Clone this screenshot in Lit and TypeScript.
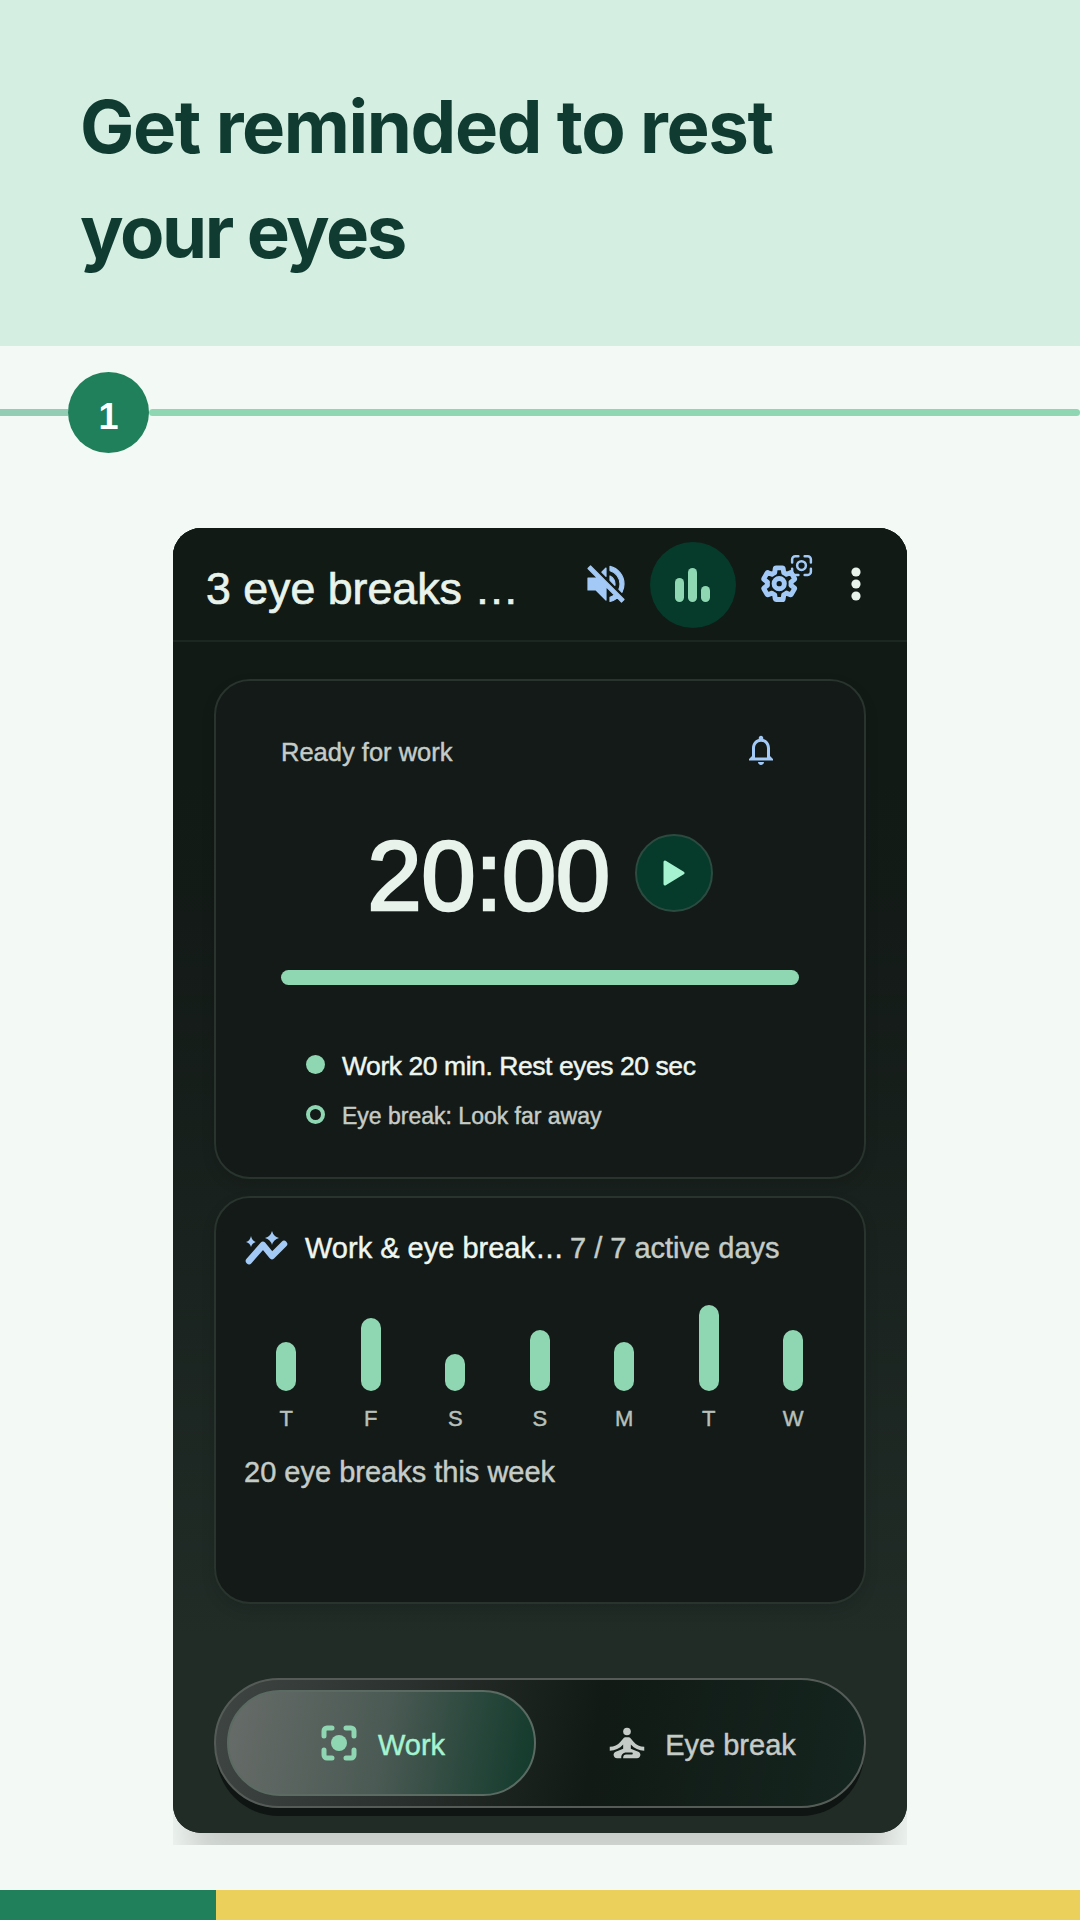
import { LitElement, html, css } from "lit";
import { customElement } from "lit/decorators.js";

const focusCorners = "M3 9V6a3 3 0 0 1 3-3h3M15 3h3a3 3 0 0 1 3 3v3M21 15v3a3 3 0 0 1-3 3h-3M9 21H6a3 3 0 0 1-3-3v-3";

@customElement("app-root")
export class AppRoot extends LitElement {
  static styles = css`
    :host { display: flex; flex-direction: column; width: 1080px; height: 1920px; background: #f3f9f5; font-family: "Liberation Sans", Arial, sans-serif; overflow: hidden; }
    svg { display: block; flex: none; }
    .hero { height: 346px; box-sizing: border-box; background: #d5eee2; padding: 74px 80px 0; }
    .hero h1 { margin: 0; font: 700 72.5px/105px Inter, sans-serif; letter-spacing: -1.4px; color: #0f3b30; }
    .hero .tight { letter-spacing: -2.4px; }
    .step { display: flex; align-items: center; margin-top: 26px; }
    .line { height: 7px; background: #93cdb3; }
    .line.a { width: 68px; }
    .line.b { flex: 1; }
    .num { width: 81px; height: 81px; border-radius: 50%; background: #21805c; color: #fff; display: flex; align-items: center; justify-content: center; font: 700 36px "Liberation Sans", sans-serif; padding-top: 9px; box-sizing: border-box; }
    .shot { margin: 75px 0 0 173px; width: 734px; height: 1317px; overflow: hidden; }
    .phone { width: 734px; height: 1305px; border-radius: 28px; background: #111a15; box-shadow: 0 50px 40px -15px rgba(0,0,0,.18); -webkit-text-stroke: .45px; }
    .phone-clip { display: flex; flex-direction: column; height: 100%; border-radius: 28px; overflow: hidden; background: linear-gradient(180deg, #111a15 8%, #131a17 30%, #212c27 85%); }
    .top { height: 114px; flex: none; box-sizing: border-box; background: #111a15; border-bottom: 2px solid #1d2722; display: flex; align-items: center; padding-left: 33px; }
    .top .title { font-size: 44.7px; color: #e8f3ec; width: 376px; white-space: nowrap; padding-top: 9px; -webkit-text-stroke: .7px; }
    .active { width: 86px; height: 86px; border-radius: 50%; background: #063a2b; display: flex; align-items: center; justify-content: center; margin: 2px 0 0 20px; }
    .gear-wrap { width: 60px; height: 60px; margin-left: 18px; position: relative; }
    .gear-wrap .mini { position: absolute; left: 35px; top: -1px; }
    .dots { margin-left: 37px; }
    .body { flex: 1; display: flex; flex-direction: column; padding: 37px 41px 25px; }
    .card { background: #131a17; border: 2px solid #29342e; border-radius: 36px; box-sizing: border-box; box-shadow: 0 6px 14px rgba(0,0,0,.12); }
    .c1 { height: 500px; flex: none; padding: 0 65px; display: flex; flex-direction: column; }
    .status { display: flex; justify-content: space-between; align-items: center; margin-top: 52px; padding-right: 20px; height: 38px; color: #c5ccc8; font-size: 25.5px; }
    .status svg { margin-top: -4px; }
    .timer { display: flex; align-items: center; justify-content: center; gap: 25px; margin-top: 63px; height: 78px; }
    .digits { font-size: 98px; letter-spacing: -.5px; color: #e8f3ec; line-height: 78px; padding-top: 5px; -webkit-text-stroke: 2.6px #e8f3ec; }
    .play { width: 78px; height: 78px; box-sizing: border-box; border-radius: 50%; background: #063a2b; border: 2px solid #2b4b40; display: flex; align-items: center; justify-content: center; }
    .bar { height: 15px; border-radius: 8px; background: #8fd6b2; margin-top: 58px; }
    .legend { display: flex; align-items: center; margin-left: 25px; }
    .legend.l1 { margin-top: 66px; color: #eef6f0; font-size: 26.5px; letter-spacing: -.44px; height: 30px; }
    .legend.l2 { margin-top: 20px; color: #c5ccc8; font-size: 23px; height: 30px; }
    .dot { width: 19px; height: 19px; box-sizing: border-box; border-radius: 50%; background: #8fd6b2; margin: -4px 17px 0 0; }
    .ring { background: none; border: 4px solid #8fd6b2; }
    .c2 { height: 408px; flex: none; margin-top: 17px; padding: 0 28px; display: flex; flex-direction: column; }
    .c2-head { display: flex; align-items: center; margin-top: 30px; height: 40px; font-size: 29px; white-space: nowrap; }
    .c2-head .name { color: #eef6f0; margin-left: 17px; }
    .c2-head .days { color: #c5ccc8; margin-left: 6px; }
    .chart { display: grid; grid-template-columns: repeat(7, 84.5px); margin: 36px 0 0 0; }
    .col { display: flex; flex-direction: column; align-items: center; height: 128px; justify-content: flex-end; }
    .b { width: 20px; border-radius: 10px; background: #8fd6b2; flex: none; }
    .d { font-size: 22px; color: #b8c0bb; margin-top: 15px; height: 26px; line-height: 26px; flex: none; }
    .week { font-size: 29px; color: #c5ccc8; margin-top: 24px; }
    .nav { margin-top: 74px; height: 130px; flex: none; box-sizing: border-box; border: 2px solid #555c58; border-radius: 65px; display: flex; align-items: center; padding: 0 0 0 11px; background: linear-gradient(100deg, #3f4542 0%, #2a302d 30%, #111a15 58%, #15251f 100%); box-shadow: 0 10px 0 -2px #0f1512; }
    .seg { display: flex; align-items: center; justify-content: center; font-size: 29px; color: #c5ccc8; }
    .seg span { padding-top: 5px; }
    .seg.on { width: 309px; height: 106px; box-sizing: border-box; border: 2px solid #5b6b63; border-radius: 53px; background: linear-gradient(100deg, #676c69 0%, #4b5a54 50%, #113a2b 100%); color: #a5f3d0; gap: 18px; }
    .seg.off { flex: 1; gap: 15px; }
    .foot { display: flex; height: 30px; flex: none; margin-top: auto; }
    .g { width: 216px; background: #21805c; }
    .y { flex: 1; background: #ebd05c; }
  `;
  render() {
    const bars: [string, number][] = [["T", 49], ["F", 73], ["S", 37], ["S", 61], ["M", 49], ["T", 86], ["W", 61]];
    return html`
      <div class="hero"><h1>Get reminded to rest<br /><span class="tight">your eyes</span></h1></div>
      <div class="step"><div class="line a"></div><div class="num">1</div><div class="line b"></div></div>
      <div class="shot"><div class="phone"><div class="phone-clip">
        <div class="top">
          <div class="title">3 eye breaks …</div>
          <svg width="48" height="48" viewBox="0 0 24 24" fill="#a3c9f7" stroke="#a3c9f7" stroke-width=".6" stroke-linejoin="round"><path d="M16.5 12c0-1.77-1.02-3.29-2.5-4.03v2.21l2.45 2.45c.03-.2.05-.41.05-.63zm2.5 0c0 .94-.2 1.82-.54 2.64l1.51 1.51C20.63 14.91 21 13.5 21 12c0-4.28-2.99-7.86-7-8.77v2.06c2.89.86 5 3.54 5 6.71zM4.27 3L3 4.27 7.73 9H3v6h4l5 5v-6.73l4.25 4.25c-.67.52-1.42.93-2.25 1.18v2.06c1.38-.31 2.63-.95 3.69-1.81L19.73 21 21 19.73l-9-9L4.27 3zM12 4L9.91 6.09 12 8.18V4z"/></svg>
          <div class="active"><svg width="36" height="34" viewBox="0 0 36 34" fill="#8fd6b2"><rect x="0" y="10" width="9" height="24" rx="4.5"/><rect x="13" y="0" width="9" height="34" rx="4.5"/><rect x="26" y="18" width="9" height="16" rx="4.5"/></svg></div>
          <div class="gear-wrap">
            <svg width="60" height="60" viewBox="0 0 40 40" fill="none" stroke="#a3c9f7" stroke-width="3" stroke-linejoin="round"><g transform="translate(3.6 6.6) scale(1.1)"><path d="M19.14 12.94c.04-.3.06-.61.06-.94 0-.32-.02-.64-.07-.94l2.03-1.58c.18-.14.23-.41.12-.61l-1.92-3.32c-.12-.22-.37-.29-.59-.22l-2.39.96c-.5-.38-1.03-.7-1.62-.94l-.36-2.54c-.04-.24-.24-.41-.48-.41h-3.84c-.24 0-.43.17-.47.41l-.36 2.54c-.59.24-1.13.57-1.62.94l-2.39-.96c-.22-.08-.47 0-.59.22L2.74 8.87c-.12.21-.08.47.12.61l2.03 1.58c-.05.3-.09.63-.09.94s.02.64.07.94l-2.03 1.58c-.18.14-.23.41-.12.61l1.92 3.32c.12.22.37.29.59.22l2.39-.96c.5.38 1.03.7 1.62.94l.36 2.54c.05.24.24.41.48.41h3.84c.24 0 .44-.17.47-.41l.36-2.54c.59-.24 1.13-.56 1.62-.94l2.39.96c.22.08.47 0 .59-.22l1.92-3.32c.12-.22.07-.47-.12-.61l-2.01-1.58z"/><circle cx="12" cy="12" r="3.1"/></g></svg>
            <svg class="mini" width="25" height="25" viewBox="0 0 24 24" fill="none" stroke="#a3c9f7" stroke-width="2.4" stroke-linecap="round"><path d="${focusCorners}"/><circle cx="12" cy="12" r="4.2"/></svg>
          </div>
          <svg class="dots" width="10" height="36" viewBox="0 0 10 36" fill="#e8f3ec"><circle cx="5" cy="6" r="4.6"/><circle cx="5" cy="18" r="4.6"/><circle cx="5" cy="30" r="4.6"/></svg>
        </div>
        <div class="body">
          <div class="card c1">
            <div class="status"><span>Ready for work</span>
              <svg width="36" height="36" viewBox="0 0 24 24" fill="#a3c9f7"><path d="M12 22c1.1 0 2-.9 2-2h-4c0 1.1.9 2 2 2zm6-6v-5c0-3.07-1.63-5.64-4.5-6.32V4c0-.83-.67-1.5-1.5-1.5s-1.5.67-1.5 1.5v.68C7.64 5.36 6 7.92 6 11v5l-2 2v1h16v-1l-2-2zm-2 1H8v-6c0-2.48 1.51-4.5 4-4.5s4 2.02 4 4.5v6z"/></svg>
            </div>
            <div class="timer"><div class="digits">20:00</div>
              <div class="play"><svg width="22" height="26" viewBox="0 0 22 26" fill="#a5f3d0" stroke="#a5f3d0" stroke-width="3" stroke-linejoin="round"><path d="M2 2v22L20 13z"/></svg></div>
            </div>
            <div class="bar"></div>
            <div class="legend l1"><span class="dot"></span>Work 20 min. Rest eyes 20 sec</div>
            <div class="legend l2"><span class="dot ring"></span>Eye break: Look far away</div>
          </div>
          <div class="card c2">
            <div class="c2-head">
              <svg width="44" height="36" viewBox="0 0 44 36" fill="none"><path d="M5 31 L19 15 L28 26 L40 14" stroke="#a3c9f7" stroke-width="6.5" stroke-linecap="round" stroke-linejoin="round"/><path d="M28 1 Q29.5 6.5 35 8 Q29.5 9.5 28 15 Q26.5 9.5 21 8 Q26.5 6.5 28 1Z M7 6 Q8 11 12 12 Q8 13 7 17 Q6 13 2 12 Q6 11 7 6Z" fill="#a3c9f7"/></svg>
              <span class="name">Work &amp; eye break…</span><span class="days">7 / 7 active days</span>
            </div>
            <div class="chart">${bars.map(([d, h]) => html`<div class="col"><div class="b" style="height:${h}px"></div><div class="d">${d}</div></div>`)}</div>
            <div class="week">20 eye breaks this week</div>
          </div>
          <div class="nav">
            <div class="seg on"><svg width="42" height="42" viewBox="0 0 42 42" fill="none" stroke="#8fd6b2" stroke-width="5" stroke-linecap="round" stroke-linejoin="round"><path d="M6 14V9a3 3 0 0 1 3-3h5M28 6h5a3 3 0 0 1 3 3v5M36 28v5a3 3 0 0 1-3 3h-5M14 36H9a3 3 0 0 1-3-3v-5"/><circle cx="21" cy="21" r="8" fill="#8fd6b2" stroke="none"/></svg><span>Work</span></div>
            <div class="seg off"><svg width="46" height="46" viewBox="0 0 24 24" fill="#c5ccc8"><circle cx="12" cy="6" r="2"/><path d="M21 16v-2c-2.24 0-4.16-.96-5.6-2.68l-1.34-1.6c-.38-.46-.94-.72-1.53-.72h-1.05c-.59 0-1.15.26-1.53.72l-1.34 1.6C7.16 13.04 5.24 14 3 14v2c2.77 0 5.19-1.17 7-3.25V15l-3.88 1.55c-.67.27-1.12.93-1.12 1.64C5 19.22 5.78 20 6.81 20H9v-.5c0-1.38 1.12-2.5 2.5-2.5h3c.28 0 .5.22.5.5s-.22.5-.5.5h-3c-.83 0-1.5.67-1.5 1.5v.5h7.19c1.03 0 1.81-.78 1.81-1.81 0-.71-.45-1.37-1.12-1.64L14 15v-2.25c1.81 2.08 4.23 3.25 7 3.25z"/></svg><span>Eye break</span></div>
          </div>
        </div>
      </div></div></div>
      <div class="foot"><div class="g"></div><div class="y"></div></div>
    `;
  }
}
